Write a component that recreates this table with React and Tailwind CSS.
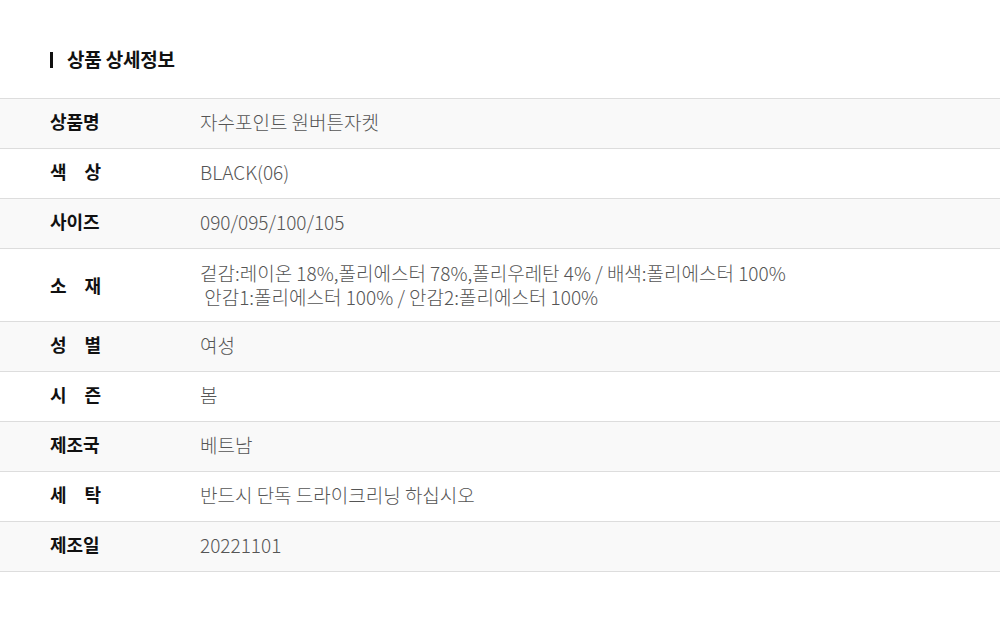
import React from "react";

const rows = [
  { label: "상품명", value: ["자수포인트 원버튼자켓"] },
  { label: "색　상", value: ["BLACK(06)"] },
  { label: "사이즈", value: ["090/095/100/105"] },
  {
    label: "소　재",
    value: [
      "겉감:레이온 18%,폴리에스터 78%,폴리우레탄 4% / 배색:폴리에스터 100%",
      "\u00a0안감1:폴리에스터 100% / 안감2:폴리에스터 100%",
    ],
  },
  { label: "성　별", value: ["여성"] },
  { label: "시　즌", value: ["봄"] },
  { label: "제조국", value: ["베트남"] },
  { label: "세　탁", value: ["반드시 단독 드라이크리닝 하십시오"] },
  { label: "제조일", value: ["20221101"] },
];

export default function App() {
  return (
    <div
      className="w-[1000px] h-[621px] bg-white"
      style={{ fontFamily: '"Noto Sans CJK KR", "Noto Sans", sans-serif' }}
    >
      <div className="pt-[46px] pl-[50px] h-[98px] flex items-start">
        <div className="flex items-center h-[27px]">
          <span className="w-[3px] h-[16px] bg-[#111] mr-[14px]" />
          <span className="text-[19px] font-bold text-[#111] tracking-[-0.2px]">
            상품 상세정보
          </span>
        </div>
      </div>
      <div className="border-t border-[#dddddd]">
        {rows.map((r, i) => (
          <div
            key={i}
            className={`flex items-center border-b border-[#dddddd] ${
              i % 2 === 0 ? "bg-[#f9f9f9]" : "bg-white"
            } ${r.value.length > 1 ? "py-[12px]" : "h-[50px] pb-[4px]"}`}
          >
            <div className="w-[200px] pl-[50px] text-[18px] font-bold text-[#111] shrink-0">
              {r.label}
            </div>
            <div className="text-[19px] font-light text-[#555] leading-[24px] whitespace-pre">
              {r.value.map((v, j) => (
                <div key={j}>{v}</div>
              ))}
            </div>
          </div>
        ))}
      </div>
    </div>
  );
}
